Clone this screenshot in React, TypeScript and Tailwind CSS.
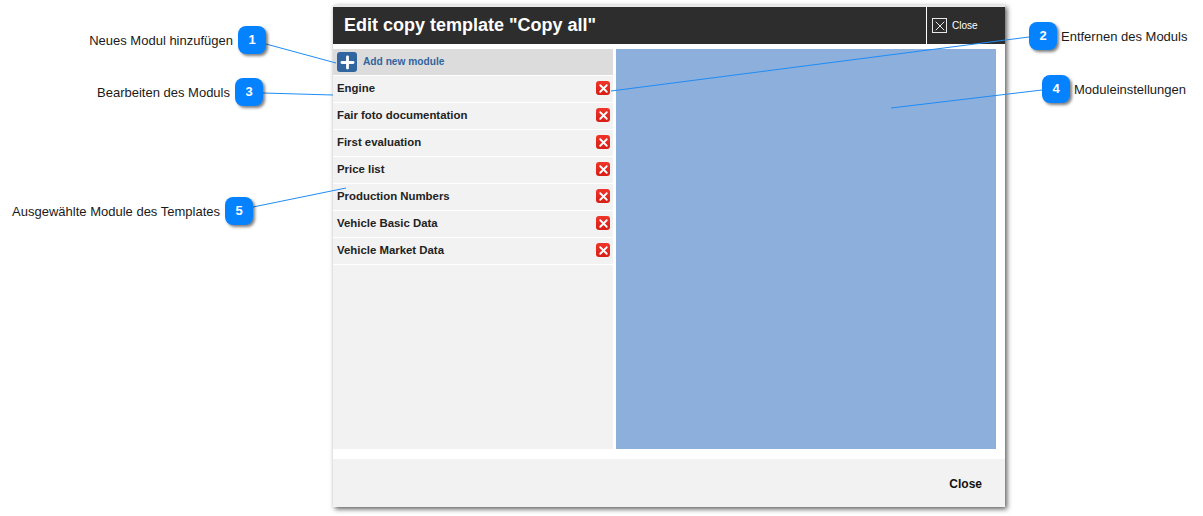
import React from 'react';
import { Plus, X } from 'lucide-react';

const modules = [
  'Engine',
  'Fair foto documentation',
  'First evaluation',
  'Price list',
  'Production Numbers',
  'Vehicle Basic Data',
  'Vehicle Market Data',
];

const callouts = [
  { n: 1, label: 'Neues Modul hinzufügen', badge: 'left-[238px] top-[26px]', text: 'right-[970px] top-[33px]' },
  { n: 2, label: 'Entfernen des Moduls', badge: 'left-[1029px] top-[22px]', text: 'left-[1061px] top-[29px]' },
  { n: 3, label: 'Bearbeiten des Moduls', badge: 'left-[235px] top-[78px]', text: 'right-[973px] top-[85px]' },
  { n: 4, label: 'Moduleinstellungen', badge: 'left-[1042px] top-[75px]', text: 'left-[1074px] top-[82px]' },
  { n: 5, label: 'Ausgewählte Module des Templates', badge: 'left-[225px] top-[197px]', text: 'right-[983px] top-[204px]' },
];

function ModuleRow({ name }: { name: string }) {
  return (
    <div className="h-[27px] flex items-center justify-between bg-[#f2f2f2] border-b border-white pb-[2px] pl-1 pr-[3px]">
      <span className="pt-[2px] text-[11.4px] font-bold text-[#222222]">{name}</span>
      <div className="w-[14px] h-[14px] rounded-[3px] bg-gradient-to-b from-[#f0342a] to-[#d81e14] flex items-center justify-center">
        <X size={13} strokeWidth={3.4} className="text-white" />
      </div>
    </div>
  );
}

function Modal() {
  return (
    <div className="w-[672px] h-[502px] bg-white flex flex-col shadow-[2px_2px_5px_rgba(0,0,0,0.65)] border-t-2 border-[#e8e8e8]">
      <div className="h-[37px] bg-[#2d2d2d] flex items-center justify-between">
        <h1 className="pl-[11px] text-[18px] font-bold text-white">Edit copy template "Copy all"</h1>
        <div className="w-[79px] h-full border-l border-white flex items-center pl-[5px] gap-[5px]">
          <div className="w-[15px] h-[15px] border border-[#e8e8e8] flex items-center justify-center">
            <X size={16} strokeWidth={1.5} className="text-[#e8e8e8] shrink-0" />
          </div>
          <span className="text-[10px] text-white">Close</span>
        </div>
      </div>
      <div className="h-[400px] mt-[5px] flex gap-[3px]">
        <div className="w-[280px] bg-[#f2f2f2]">
          <div className="h-[27px] border-b border-white bg-[#dcdcdc] flex items-center pl-1 gap-[6px]">
            <div className="w-5 h-5 rounded-[3px] bg-[#30659f] flex items-center justify-center">
              <Plus size={19} strokeWidth={3.6} className="text-white" />
            </div>
            <span className="text-[10.2px] font-bold text-[#30659f]">Add new module</span>
          </div>
          {modules.map((m) => (
            <ModuleRow key={m} name={m} />
          ))}
        </div>
        <div className="w-[380px] bg-[#8cafdc]" />
      </div>
      <div className="mt-[10px] flex-1 bg-[#f2f2f2] flex items-center justify-end pr-[23px]">
        <span className="pt-[2px] text-[12px] font-bold text-[#111111]">Close</span>
      </div>
    </div>
  );
}

export default function App() {
  return (
    <div className="relative w-[1203px] h-[516px] overflow-hidden bg-white pl-[333px] pt-[5px] font-['Liberation_Sans',sans-serif]">
      <Modal />

      <svg className="absolute left-0 top-0" width="1203" height="516" fill="none" stroke="#1e8cf5" strokeWidth="1">
        <path d="M266 44 L336 63" />
        <path d="M1029 37 L611 91" />
        <path d="M263 93 L333 95" />
        <path d="M1042 90 L891 108" />
        <path d="M253 207 L346 188" />
      </svg>

      {callouts.map((c) => (
        <React.Fragment key={c.n}>
          <div className={`absolute ${c.badge} w-[28px] h-[28px] rounded-[8px] bg-[#0582ff] shadow-[2px_2px_3px_rgba(0,0,0,0.5)] flex items-center justify-center text-[13px] font-bold text-white`}>
            {c.n}
          </div>
          <span className={`absolute ${c.text} text-[13px] leading-[16px] text-[#1a1a1a] whitespace-nowrap`}>{c.label}</span>
        </React.Fragment>
      ))}
    </div>
  );
}
